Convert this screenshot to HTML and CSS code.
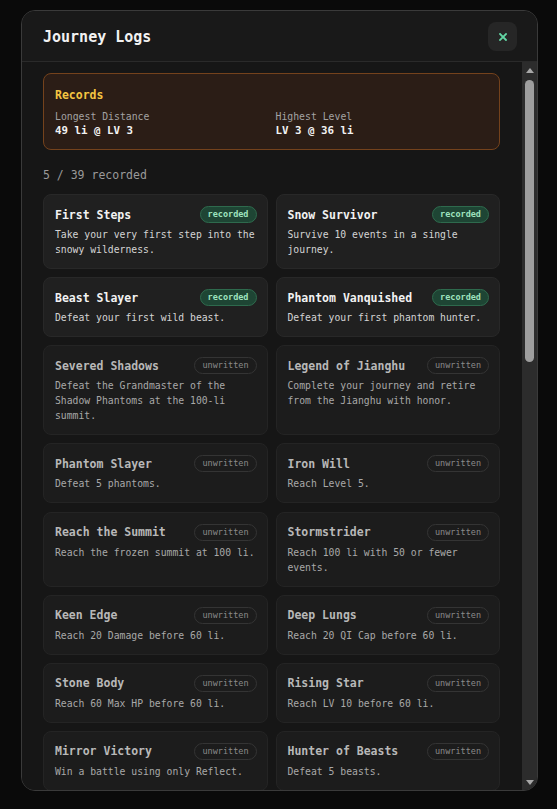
FILE: index.html
```html
<!DOCTYPE html>
<html lang="en">
<head>
<meta charset="utf-8">
<title>Journey Logs</title>
<link rel="stylesheet" href="styles.css">
</head>
<body>
<div class="modal">
  <header class="modal-header">
    <h1 class="modal-title">Journey Logs</h1>
    <button class="close-btn" aria-label="Close">
      <svg width="8" height="8" viewBox="0 0 8 8"><path d="M1 1 L7 7 M7 1 L1 7" stroke="#62d6a4" stroke-width="1.8" stroke-linecap="square"/></svg>
    </button>
  </header>
  <div class="modal-main">
  <div class="modal-body">
    <section class="records">
      <div class="records-title">Records</div>
      <div class="records-grid">
        <div class="record">
          <div class="record-label">Longest Distance</div>
          <div class="record-value">49 li @ LV 3</div>
        </div>
        <div class="record">
          <div class="record-label">Highest Level</div>
          <div class="record-value">LV 3 @ 36 li</div>
        </div>
      </div>
    </section>
    <div class="count">5 / 39 recorded</div>
    <div class="log-grid">
      <div class="log done"><div class="log-head"><span class="log-name">First Steps</span><span class="badge">recorded</span></div><p class="log-desc">Take your very first step into the snowy wilderness.</p></div>
      <div class="log done"><div class="log-head"><span class="log-name">Snow Survivor</span><span class="badge">recorded</span></div><p class="log-desc">Survive 10 events in a single journey.</p></div>
      <div class="log done"><div class="log-head"><span class="log-name">Beast Slayer</span><span class="badge">recorded</span></div><p class="log-desc">Defeat your first wild beast.</p></div>
      <div class="log done"><div class="log-head"><span class="log-name">Phantom Vanquished</span><span class="badge">recorded</span></div><p class="log-desc">Defeat your first phantom hunter.</p></div>
      <div class="log"><div class="log-head"><span class="log-name">Severed Shadows</span><span class="badge">unwritten</span></div><p class="log-desc">Defeat the Grandmaster of the Shadow Phantoms at the 100-li summit.</p></div>
      <div class="log"><div class="log-head"><span class="log-name">Legend of Jianghu</span><span class="badge">unwritten</span></div><p class="log-desc">Complete your journey and retire from the Jianghu with honor.</p></div>
      <div class="log"><div class="log-head"><span class="log-name">Phantom Slayer</span><span class="badge">unwritten</span></div><p class="log-desc">Defeat 5 phantoms.</p></div>
      <div class="log"><div class="log-head"><span class="log-name">Iron Will</span><span class="badge">unwritten</span></div><p class="log-desc">Reach Level 5.</p></div>
      <div class="log"><div class="log-head"><span class="log-name">Reach the Summit</span><span class="badge">unwritten</span></div><p class="log-desc">Reach the frozen summit at 100 li.</p></div>
      <div class="log"><div class="log-head"><span class="log-name">Stormstrider</span><span class="badge">unwritten</span></div><p class="log-desc">Reach 100 li with 50 or fewer events.</p></div>
      <div class="log"><div class="log-head"><span class="log-name">Keen Edge</span><span class="badge">unwritten</span></div><p class="log-desc">Reach 20 Damage before 60 li.</p></div>
      <div class="log"><div class="log-head"><span class="log-name">Deep Lungs</span><span class="badge">unwritten</span></div><p class="log-desc">Reach 20 QI Cap before 60 li.</p></div>
      <div class="log"><div class="log-head"><span class="log-name">Stone Body</span><span class="badge">unwritten</span></div><p class="log-desc">Reach 60 Max HP before 60 li.</p></div>
      <div class="log"><div class="log-head"><span class="log-name">Rising Star</span><span class="badge">unwritten</span></div><p class="log-desc">Reach LV 10 before 60 li.</p></div>
      <div class="log"><div class="log-head"><span class="log-name">Mirror Victory</span><span class="badge">unwritten</span></div><p class="log-desc">Win a battle using only Reflect.</p></div>
      <div class="log"><div class="log-head"><span class="log-name">Hunter of Beasts</span><span class="badge">unwritten</span></div><p class="log-desc">Defeat 5 beasts.</p></div>
      <div class="log"><div class="log-head"><span class="log-name">Beast Master</span><span class="badge">unwritten</span></div><p class="log-desc">Defeat 20 beasts.</p></div>
      <div class="log"><div class="log-head"><span class="log-name">Phantom Bane</span><span class="badge">unwritten</span></div><p class="log-desc">Defeat 20 phantoms.</p></div>
      <div class="log"><div class="log-head"><span class="log-name">Frostbitten</span><span class="badge">unwritten</span></div><p class="log-desc">Survive a battle with 5 HP or less.</p></div>
      <div class="log"><div class="log-head"><span class="log-name">Seasoned Wanderer</span><span class="badge">unwritten</span></div><p class="log-desc">Survive 50 events in a single journey.</p></div>
      <div class="log"><div class="log-head"><span class="log-name">Untouchable</span><span class="badge">unwritten</span></div><p class="log-desc">Win a battle without taking damage.</p></div>
      <div class="log"><div class="log-head"><span class="log-name">Flowing Qi</span><span class="badge">unwritten</span></div><p class="log-desc">Spend 100 QI in a single journey.</p></div>
      <div class="log"><div class="log-head"><span class="log-name">Iron Skin</span><span class="badge">unwritten</span></div><p class="log-desc">Block 50 damage in one battle.</p></div>
      <div class="log"><div class="log-head"><span class="log-name">Swift Blade</span><span class="badge">unwritten</span></div><p class="log-desc">Win a battle in 3 turns or fewer.</p></div>
      <div class="log"><div class="log-head"><span class="log-name">Master of Arms</span><span class="badge">unwritten</span></div><p class="log-desc">Reach LV 20.</p></div>
      <div class="log"><div class="log-head"><span class="log-name">Cold Blooded</span><span class="badge">unwritten</span></div><p class="log-desc">Win 3 battles in a row without resting.</p></div>
      <div class="log"><div class="log-head"><span class="log-name">Lone Wolf</span><span class="badge">unwritten</span></div><p class="log-desc">Reach 50 li without visiting a shrine.</p></div>
      <div class="log"><div class="log-head"><span class="log-name">Pilgrim</span><span class="badge">unwritten</span></div><p class="log-desc">Visit 10 shrines.</p></div>
      <div class="log"><div class="log-head"><span class="log-name">Merchant's Friend</span><span class="badge">unwritten</span></div><p class="log-desc">Trade with 5 merchants.</p></div>
      <div class="log done"><div class="log-head"><span class="log-name">Treasure Seeker</span><span class="badge">recorded</span></div><p class="log-desc">Open your first treasure chest.</p></div>
      <div class="log"><div class="log-head"><span class="log-name">Steadfast</span><span class="badge">unwritten</span></div><p class="log-desc">Reach 80 li with full HP.</p></div>
      <div class="log"><div class="log-head"><span class="log-name">Thousand Steps</span><span class="badge">unwritten</span></div><p class="log-desc">Travel 1000 li across all journeys.</p></div>
      <div class="log"><div class="log-head"><span class="log-name">Veteran</span><span class="badge">unwritten</span></div><p class="log-desc">Complete 10 journeys.</p></div>
      <div class="log"><div class="log-head"><span class="log-name">Ascendant</span><span class="badge">unwritten</span></div><p class="log-desc">Reach LV 30.</p></div>
      <div class="log"><div class="log-head"><span class="log-name">Wind Walker</span><span class="badge">unwritten</span></div><p class="log-desc">Flee from 5 battles.</p></div>
      <div class="log"><div class="log-head"><span class="log-name">Perfect Mirror</span><span class="badge">unwritten</span></div><p class="log-desc">Reflect 100 total damage.</p></div>
      <div class="log"><div class="log-head"><span class="log-name">Blizzard Born</span><span class="badge">unwritten</span></div><p class="log-desc">Survive a blizzard event.</p></div>
      <div class="log"><div class="log-head"><span class="log-name">Mountain Sage</span><span class="badge">unwritten</span></div><p class="log-desc">Meet the hermit of the peak.</p></div>
      <div class="log"><div class="log-head"><span class="log-name">Eternal Wanderer</span><span class="badge">unwritten</span></div><p class="log-desc">Record every other journey log.</p></div>
    </div>
  </div>
  <div class="scrollbar" aria-hidden="true">
    <div class="sb-arrow sb-up"></div>
    <div class="sb-track"><div class="sb-thumb"></div></div>
    <div class="sb-arrow sb-down"></div>
  </div>
  </div>
</div>
</body>
</html>
```

FILE: styles.css
```css
* { box-sizing: border-box; }

html, body {
  margin: 0;
  padding: 0;
  background: #0a0a0a;
  font-family: "DejaVu Sans Mono", "Liberation Mono", monospace;
  color: #e8e8e8;
}

body {
  padding: 10px 0 0 21px;
  height: 809px;
  overflow: hidden;
}

.modal {
  width: 517px;
  height: 781px;
  border: 1px solid #3a3a3a;
  border-radius: 14px;
  background: #171717;
  display: flex;
  flex-direction: column;
  overflow: hidden;
}

.modal-header {
  flex: 0 0 auto;
  height: 51px;
  display: flex;
  align-items: center;
  justify-content: space-between;
  padding: 1px 20px 0 21px;
  background: #191919;
  border-bottom: 1px solid #2a2a2a;
}

.modal-title {
  margin: 0;
  font-size: 15px;
  font-weight: bold;
  color: #f2f2f2;
}

.close-btn {
  width: 29px;
  height: 29px;
  border: none;
  border-radius: 8px;
  background: #262626;
  display: flex;
  align-items: center;
  justify-content: center;
  padding: 0;
}

.modal-main {
  flex: 1 1 auto;
  min-height: 0;
  display: flex;
}

.modal-body {
  flex: 1 1 auto;
  min-width: 0;
  overflow-y: auto;
  scrollbar-width: none;
  padding: 11px 22px 16px 21px;
  background: #161616;
}

.scrollbar {
  flex: 0 0 15px;
  display: flex;
  flex-direction: column;
  align-items: center;
  background: #2c2c2c;
}

.sb-arrow {
  flex: 0 0 15px;
  width: 15px;
  display: flex;
  align-items: center;
  justify-content: center;
}

.sb-arrow::before {
  content: "";
  width: 0;
  height: 0;
  border-left: 4.5px solid transparent;
  border-right: 4.5px solid transparent;
}

.sb-up::before {
  border-bottom: 5px solid #a8a8a8;
  margin-top: 1px;
}

.sb-down::before {
  border-top: 5px solid #a8a8a8;
  margin-bottom: 1px;
}

.sb-track {
  flex: 1 1 auto;
  width: 15px;
  display: flex;
  justify-content: center;
}

.sb-thumb {
  width: 9px;
  height: 282px;
  margin-top: 3px;
  border-radius: 5px;
  background: #9e9e9e;
}

.records {
  border: 1px solid #74421c;
  border-radius: 8px;
  background: #2b1d16;
  padding: 13px 11px 11px;
}

.records-title {
  font-size: 11.5px;
  font-weight: bold;
  color: #f4c542;
  line-height: 17px;
  margin-bottom: 6px;
}

.records-grid {
  display: grid;
  grid-template-columns: 1fr 1fr;
  column-gap: 8px;
}

.record-label {
  font-size: 9.8px;
  line-height: 13px;
  color: #a3a3a3;
}

.record-value {
  font-size: 10.8px;
  line-height: 15px;
  font-weight: bold;
  color: #f2f2f2;
}

.count {
  font-size: 11.5px;
  line-height: 17px;
  color: #9a9a9a;
  margin: 17px 0 10px;
}

.log-grid {
  display: grid;
  grid-template-columns: 1fr 1fr;
  column-gap: 8px;
  row-gap: 8.15px;
}

.log {
  background: #1c1c1c;
  border: 1px solid #242424;
  border-radius: 8px;
  padding: 11px 10px 11px 11px;
  display: flex;
  flex-direction: column;
  gap: 4px;
}

.log.done {
  background: #202020;
  border-color: #282828;
}

.log-head {
  display: flex;
  align-items: center;
  justify-content: space-between;
  height: 17px;
}

.log-name {
  font-size: 11.5px;
  font-weight: bold;
  color: #b8b8b8;
}

.log.done .log-name {
  color: #f2f2f2;
}

.badge {
  font-size: 8.5px;
  line-height: 15px;
  padding: 0 7px;
  border-radius: 9px;
  border: 1px solid #343434;
  background: #1c1c1c;
  color: #8a8a8a;
}

.log.done .badge {
  background: #1e4534;
  border-color: #2e6a4d;
  color: #9fe3bf;
  font-weight: bold;
}

.log-desc {
  margin: 0;
  font-size: 9.75px;
  line-height: 15px;
  color: #a8a8a8;
}

.log.done .log-desc {
  color: #d4d4d4;
}
```
